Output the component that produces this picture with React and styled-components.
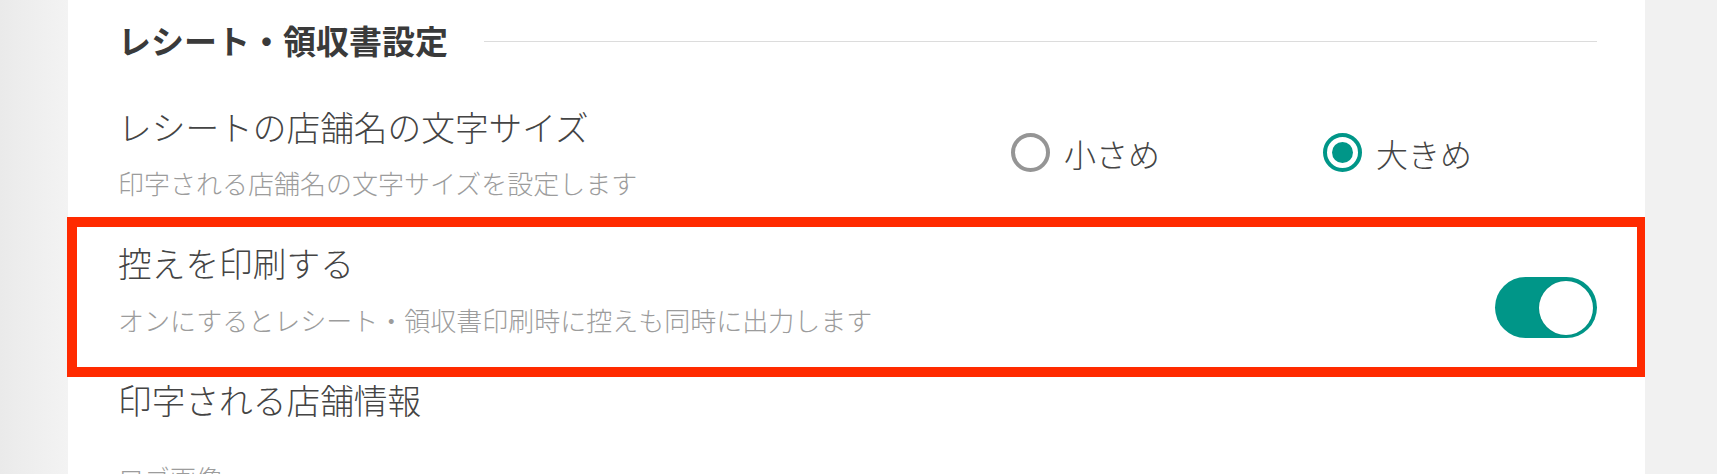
import React, { useState } from 'react';
import styled, { createGlobalStyle } from 'styled-components';

const colours = {
  teal: '#009688',
  red: '#ff2a00',
  text: '#444444',
  title: '#3a3a3a',
  muted: '#9c9c9c',
  rule: '#dcdcdc',
  gutter: '#f1f1f1',
};

const GlobalStyle = createGlobalStyle`
  html, body {
    margin: 0;
    padding: 0;
    background: ${colours.gutter};
  }
  body {
    font-family: "Noto Sans CJK JP", "Noto Sans", sans-serif;
    color: ${colours.text};
  }
`;

const Page = styled.div`
  display: grid;
  grid-template-columns: 68px 1fr 72px;
  height: 474px;
  overflow: hidden;
`;

const Gutter = styled.div`
  background: ${({ $side }) =>
    $side === 'left' ? 'linear-gradient(to right, #eaeaea, #f3f3f3)' : colours.gutter};
`;

const Panel = styled.main`
  background: #fff;
  display: flex;
  flex-direction: column;
`;

const SectionHeader = styled.header`
  display: flex;
  align-items: center;
  padding: 17px 48px 2px 50px;
  height: 46px;
`;

const SectionTitle = styled.h2`
  margin: 0;
  font-size: 33px;
  line-height: 46px;
  font-weight: 700;
  color: ${colours.title};
  white-space: nowrap;
`;

const Rule = styled.div`
  flex: 1;
  height: 1px;
  margin: 2px 0 0 36px;
  background: ${colours.rule};
`;

const Row = styled.section`
  display: grid;
  grid-template-columns: 1fr auto;
  align-items: center;
  padding: ${({ $pad }) => $pad};
  ${({ $highlighted }) =>
    $highlighted &&
    `
    border: 10px solid ${colours.red};
    margin: 0 -2px 0 -1px;
  `}
`;

const TextBlock = styled.div`
  display: flex;
  flex-direction: column;
  gap: ${({ $gap }) => $gap || 15}px;
`;

const Label = styled.div`
  font-size: 33.7px;
  line-height: 46px;
  font-weight: 300;
  color: ${colours.text};
`;

const Description = styled.div`
  font-size: 26px;
  line-height: 36px;
  font-weight: 300;
  color: ${colours.muted};
`;

const RadioGroup = styled.div`
  display: flex;
  gap: 163px;
  margin-right: 125px;
`;

const RadioOption = styled.label`
  display: flex;
  align-items: center;
  gap: 14px;
  font-size: 32px;
  line-height: 46px;
  font-weight: 300;
  color: ${colours.text};
  cursor: pointer;
`;

const RadioMark = styled.span`
  box-sizing: border-box;
  width: 39px;
  height: 39px;
  border-radius: 50%;
  border: 4.5px solid ${({ $checked }) => ($checked ? colours.teal : '#959595')};
  display: flex;
  align-items: center;
  justify-content: center;
  &::after {
    content: '';
    width: 21px;
    height: 21px;
    border-radius: 50%;
    background: ${({ $checked }) => ($checked ? colours.teal : 'transparent')};
  }
`;

const Toggle = styled.button`
  box-sizing: border-box;
  width: 102px;
  height: 61px;
  border: none;
  border-radius: 31px;
  padding: 0 4px;
  background: ${({ $on }) => ($on ? colours.teal : '#cfcfcf')};
  display: flex;
  align-items: center;
  justify-content: ${({ $on }) => ($on ? 'flex-end' : 'flex-start')};
  align-self: end;
  cursor: pointer;
`;

const Knob = styled.span`
  width: 54px;
  height: 54px;
  border-radius: 50%;
  background: #fff;
  box-shadow: 0 0 2px rgba(0, 0, 0, 0.15);
`;

const sizes = [
  { id: 'small', label: '小さめ' },
  { id: 'large', label: '大きめ' },
];

const App = () => {
  const [size, setSize] = useState('large');
  const [printCopy, setPrintCopy] = useState(true);

  return (
    <>
      <GlobalStyle />
      <Page>
        <Gutter $side='left' />
        <Panel>
          <SectionHeader>
            <SectionTitle>レシート・領収書設定</SectionTitle>
            <Rule />
          </SectionHeader>

          <Row $pad='39px 48px 16px 50px'>
            <TextBlock>
              <Label>レシートの店舗名の文字サイズ</Label>
              <Description>印字される店舗名の文字サイズを設定します</Description>
            </TextBlock>
            <RadioGroup>
              {sizes.map(s => (
                <RadioOption key={s.id} onClick={() => setSize(s.id)}>
                  <RadioMark $checked={size === s.id} />
                  {s.label}
                </RadioOption>
              ))}
            </RadioGroup>
          </Row>

          <Row $highlighted $pad='13px 40px 29px 41px'>
            <TextBlock $gap={16}>
              <Label>控えを印刷する</Label>
              <Description>オンにするとレシート・領収書印刷時に控えも同時に出力します</Description>
            </TextBlock>
            <Toggle $on={printCopy} onClick={() => setPrintCopy(v => !v)}>
              <Knob />
            </Toggle>
          </Row>

          <Row $pad='0 48px 0 50px'>
            <TextBlock $gap={37}>
              <Label>印字される店舗情報</Label>
              <Description>ロゴ画像</Description>
            </TextBlock>
          </Row>
        </Panel>
        <Gutter $side='right' />
      </Page>
    </>
  );
};

export default App;
